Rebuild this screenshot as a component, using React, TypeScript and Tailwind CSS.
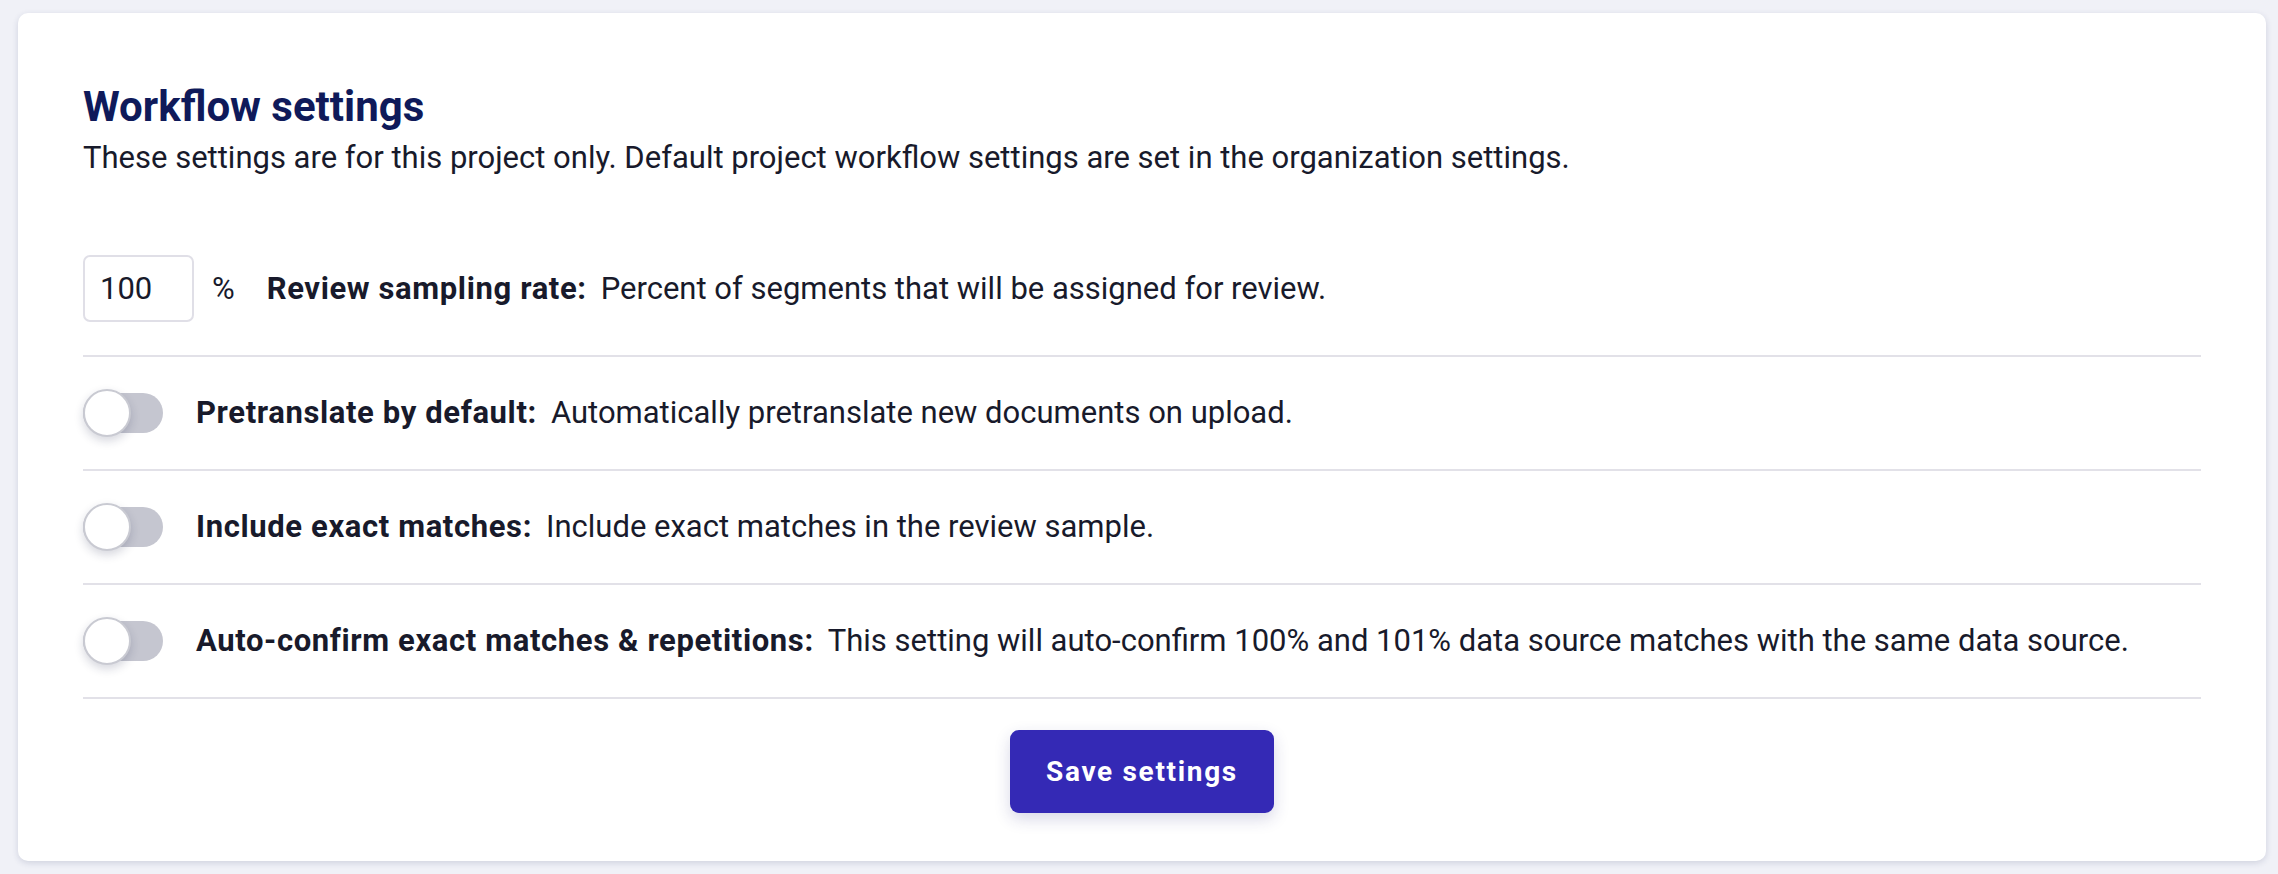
import { useState } from "react"

// Project workflow settings card: sampling rate + three toggles + save.
type Setting = { key: string; label: string; desc: string }

const TOGGLES: Setting[] = [
  { key: "pretranslate", label: "Pretranslate by default:", desc: "Automatically pretranslate new documents on upload." },
  { key: "exact", label: "Include exact matches:", desc: "Include exact matches in the review sample." },
  {
    key: "autoconfirm",
    label: "Auto-confirm exact matches & repetitions:",
    desc: "This setting will auto-confirm 100% and 101% data source matches with the same data source.",
  },
]

function Toggle({ on, onChange }: { on: boolean; onChange: () => void }) {
  return (
    <div className="flex h-[48px] shrink-0 items-center">
      <button
        type="button"
        role="switch"
        aria-checked={on}
        onClick={onChange}
        className={`relative h-[40px] w-[80px] rounded-full ${on ? "bg-[#3429b5]" : "bg-[#c5c6d0]"}`}
      >
        <span
          className={`absolute top-1/2 h-[48px] w-[48px] -translate-y-1/2 rounded-full border-2 border-[#c9cad2] bg-white shadow-[0_4px_10px_rgba(30,35,70,0.18)] ${on ? "left-[32px]" : "left-0"}`}
        />
      </button>
    </div>
  )
}

export default function App() {
  const [rate, setRate] = useState("100")
  const [flags, setFlags] = useState<Record<string, boolean>>({})

  return (
    <div className="min-h-screen bg-[#f0f1f7] pb-[12px] pl-[18px] pr-[12px] pt-[13px] font-['Roboto',sans-serif] text-[31px] leading-[40px] text-[#181a2b]">
      <div className="rounded-[10px] bg-white px-[65px] pb-[48px] pt-[69px] shadow-[0_2px_6px_rgba(40,50,100,0.16)]">
        <h1 className="text-[42px] font-bold leading-[50px] text-[#0f1a5a]">Workflow settings</h1>
        <p className="mt-[6px]">
          These settings are for this project only. Default project workflow settings are set in the organization settings.
        </p>

        <div className="mt-[77px] flex items-center border-b-2 border-[#e2e1e8] pb-[33px]">
          <input
            value={rate}
            onChange={(e) => setRate(e.target.value)}
            className="h-[67px] w-[111px] rounded-[7px] border-2 border-[#e0dfe7] pl-[15px] text-[31px] text-[#181a2b] outline-none"
          />
          <span className="ml-[18px]">%</span>
          <span className="ml-[32px] font-bold tracking-[0.02em]">Review sampling rate:</span>
          <span className="ml-[14px]">Percent of segments that will be assigned for review.</span>
        </div>

        {TOGGLES.map((t) => (
          <div key={t.key} className="flex items-center border-b-2 border-[#e2e1e8] py-[32px]">
            <Toggle on={!!flags[t.key]} onChange={() => setFlags((f) => ({ ...f, [t.key]: !f[t.key] }))} />
            <span className="ml-[33px] font-bold tracking-[0.02em]">{t.label}</span>
            <span className="ml-[14px]">{t.desc}</span>
          </div>
        ))}

        <div className="flex justify-center pt-[31px]">
          <button
            type="button"
            className="h-[83px] w-[264px] rounded-[9px] bg-[#3429b5] text-[28px] font-bold tracking-[0.06em] text-white shadow-[0_6px_16px_rgba(40,40,120,0.18)]"
          >
            Save settings
          </button>
        </div>
      </div>
    </div>
  )
}
